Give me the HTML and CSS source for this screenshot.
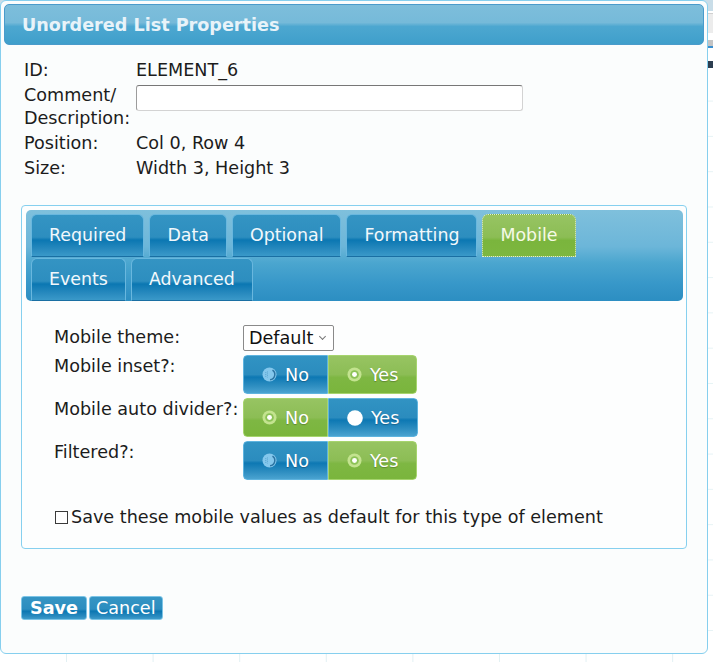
FILE: index.html
```html
<!DOCTYPE html>
<html lang="en">
<head>
<meta charset="utf-8">
<title>Unordered List Properties</title>
<link rel="stylesheet" href="styles.css">
</head>
<body>
<div class="page">
  <div class="page-top"></div>
  <div class="page-bar"></div>
  <div class="page-line"></div>
  <div class="page-nav"></div>
</div>

<div class="dialog" role="dialog" aria-labelledby="dlg-title">
  <div class="dlg-title" id="dlg-title">Unordered List Properties</div>
  <div class="dlg-body">
    <div class="info">
      <div class="info-label">ID:</div>
      <div class="info-value">ELEMENT_6</div>
      <div class="info-label">Comment/<br>Description:</div>
      <div class="info-value"><input class="comment" type="text"></div>
      <div class="info-label">Position:</div>
      <div class="info-value">Col 0, Row 4</div>
      <div class="info-label">Size:</div>
      <div class="info-value">Width 3, Height 3</div>
    </div>

    <div class="tabs">
      <div class="tab-head">
        <div class="tab-row">
          <span class="tab">Required</span>
          <span class="tab">Data</span>
          <span class="tab">Optional</span>
          <span class="tab">Formatting</span>
          <span class="tab active">Mobile</span>
        </div>
        <div class="tab-row">
          <span class="tab">Events</span>
          <span class="tab">Advanced</span>
        </div>
      </div>

      <div class="tab-content">
        <div class="form">
          <div class="f-label">Mobile theme:</div>
          <div class="f-field">
            <span class="select-wrap">
              <select class="select"><option>Default</option></select>
            </span>
          </div>

          <div class="f-label">Mobile inset?:</div>
          <div class="f-field">
            <div class="seg-group">
              <span class="seg off"><svg class="ico" viewBox="0 0 16 16"><circle cx="8" cy="8" r="7.5" fill="#84c7ec"/><path d="M11.2 3.4 A5.6 5.6 0 0 1 8.6 13.6" fill="none" stroke="#2c74a2" stroke-width="1.6"/><path d="M4 5.5v5M5.8 4.8v6.4" stroke="#4f9ccb" stroke-width="0.9" stroke-dasharray="1 1"/></svg>No</span>
              <span class="seg on"><svg class="ico" viewBox="0 0 16 16"><circle cx="8" cy="8" r="7.5" fill="#c3e38f"/><circle cx="8" cy="8" r="4.6" fill="#8cc256"/><circle cx="8" cy="8" r="2.6" fill="#ffffff"/></svg>Yes</span>
            </div>
          </div>

          <div class="f-label">Mobile auto divider?:</div>
          <div class="f-field">
            <div class="seg-group">
              <span class="seg on"><svg class="ico" viewBox="0 0 16 16"><circle cx="8" cy="8" r="7.5" fill="#c3e38f"/><circle cx="8" cy="8" r="4.6" fill="#8cc256"/><circle cx="8" cy="8" r="2.6" fill="#ffffff"/></svg>No</span>
              <span class="seg off"><svg class="ico big" viewBox="0 0 16 16"><circle cx="8" cy="8" r="7.8" fill="#ffffff"/></svg>Yes</span>
            </div>
          </div>

          <div class="f-label">Filtered?:</div>
          <div class="f-field">
            <div class="seg-group">
              <span class="seg off"><svg class="ico" viewBox="0 0 16 16"><circle cx="8" cy="8" r="7.5" fill="#84c7ec"/><path d="M11.2 3.4 A5.6 5.6 0 0 1 8.6 13.6" fill="none" stroke="#2c74a2" stroke-width="1.6"/><path d="M4 5.5v5M5.8 4.8v6.4" stroke="#4f9ccb" stroke-width="0.9" stroke-dasharray="1 1"/></svg>No</span>
              <span class="seg on"><svg class="ico" viewBox="0 0 16 16"><circle cx="8" cy="8" r="7.5" fill="#c3e38f"/><circle cx="8" cy="8" r="4.6" fill="#8cc256"/><circle cx="8" cy="8" r="2.6" fill="#ffffff"/></svg>Yes</span>
            </div>
          </div>
        </div>

        <label class="save-default"><input type="checkbox" class="chk">Save these mobile values as default for this type of element</label>
      </div>
    </div>

    <div class="actions">
      <button class="btn btn-save" type="button">Save</button>
      <button class="btn btn-cancel" type="button">Cancel</button>
    </div>
  </div>
</div>
</body>
</html>
```

FILE: styles.css
```css
html, body {
  margin: 0;
  padding: 0;
}

body {
  width: 713px;
  height: 662px;
  overflow: hidden;
  position: relative;
  font-family: "DejaVu Sans", Verdana, sans-serif;
  background-color: #ffffff;
  background-image:
    linear-gradient(90deg, #e2f0f3 0 1px, transparent 1px),
    linear-gradient(180deg, #e6f3f5 0 1px, transparent 1px);
  background-size: 86.6px 100%, 100% 35.3px;
  background-position: 66px 0, 0 30px;
  background-repeat: repeat-x, repeat-y;
}

/* underlying page (behind the dialog) */
.page {
  display: flex;
  flex-direction: column;
}
.page-top {
  height: 11px;
  background: #c9dde8;
}
.page-bar {
  height: 19px;
  margin-top: 2px;
  background: #ececec;
  border-top: 1px solid #d0d0d0;
}
.page-line {
  height: 6px;
  margin-top: 7px;
  background: #c4c4c4;
  border-bottom: 2px solid #3b8fd0;
}
.page-nav {
  height: 7px;
  margin-top: 13px;
  background: #2c3e50;
}

/* dialog */
.dialog {
  position: absolute;
  left: 0;
  top: 0;
  width: 708px;
  height: 654px;
  box-sizing: border-box;
  padding: 3px;
  background: #fbfdfd;
  border: 1px solid #86cfee;
  border-radius: 6px;
}

.dlg-title {
  height: 41px;
  box-sizing: border-box;
  padding-left: 17px;
  border: 1px solid #4a9bcb;
  border-radius: 5px;
  background: linear-gradient(to bottom, #7dbedb 0%, #76bad9 45%, #4da7d0 55%, #3f9fcb 100%);
  color: #e8f3f9;
  font-weight: bold;
  font-size: 17.6px;
  line-height: 40px;
}

.dlg-body {
  padding: 13px 17px 0 17px;
}

/* info block */
.info {
  display: grid;
  grid-template-columns: 112px 1fr;
  margin-left: 3px;
  font-size: 17.6px;
  line-height: 23px;
  color: #1c1c1c;
}
.info-label,
.info-value {
  padding: 1px 0;
}
.comment {
  display: block;
  box-sizing: border-box;
  width: 387px;
  height: 26px;
  margin: 1px 0 0 0;
  padding: 0 4px;
  border: 1px solid #d3d3d3;
  border-top-color: #777777;
  border-left-color: #9c9c9c;
  border-radius: 3px;
  background: #ffffff;
  font-family: inherit;
  font-size: 16px;
}

/* tabs panel */
.tabs {
  margin-top: 24px;
  border: 1px solid #86d0ef;
  border-radius: 4px;
  padding: 4px 3px 0 4px;
  background: #fdfefe;
}
.tab-head {
  display: flex;
  flex-direction: column;
  gap: 1px;
  padding: 4px 0 0 5px;
  border-radius: 5px;
  background: linear-gradient(to bottom, #7fc0dc 0%, #6cb6d9 40%, #4ba6cf 58%, #3898c9 80%, #2c8ec2 100%);
}
.tab-row {
  display: flex;
  gap: 5px;
}
.tab {
  height: 43px;
  box-sizing: border-box;
  padding: 0 17px;
  border: 1px solid #69b7de;
  border-bottom-color: #1a6fa3;
  border-radius: 6px 6px 0 0;
  background: linear-gradient(to bottom, #3494c3 0%, #2d8ebf 54%, #0b77b2 61%, #2a8bbf 85%, #3a99c9 100%);
  color: #f2f8fc;
  font-size: 17.4px;
  line-height: 41px;
}
.tab.active {
  border: 1px dotted #e4ecd0;
  background: linear-gradient(to bottom, #97c462 0%, #8cbd55 54%, #7ab53d 62%, #7db73f 100%);
  color: #f6fae6;
}

.tab-content {
  padding: 24px 0 19px 28px;
  color: #1c1c1c;
  font-size: 17.6px;
}

.form {
  display: grid;
  grid-template-columns: 189px auto;
  row-gap: 4px;
  align-items: start;
}
.f-label {
  line-height: 23px;
}
.f-label:first-child {
  padding-top: 1px;
}
.f-field {
  display: flex;
}

.select-wrap {
  position: relative;
  display: inline-block;
}
.select {
  appearance: none;
  -webkit-appearance: none;
  display: block;
  box-sizing: border-box;
  width: 91px;
  height: 26px;
  margin: 0;
  padding: 0 0 0 5px;
  border: 1px solid #8a8a8a;
  border-radius: 2px;
  background: #ffffff;
  color: #111111;
  font-family: inherit;
  font-size: 17.6px;
}
.select-wrap::after {
  content: "";
  position: absolute;
  right: 9px;
  top: 9px;
  width: 4px;
  height: 4px;
  border-right: 1px solid #777777;
  border-bottom: 1px solid #777777;
  transform: rotate(45deg);
  pointer-events: none;
}

/* segmented radio groups */
.seg-group {
  display: inline-flex;
  height: 39px;
  border-radius: 4px;
  overflow: hidden;
}
.seg {
  display: flex;
  align-items: center;
  gap: 8px;
  box-sizing: border-box;
  padding: 0 18px 0 18px;
  color: #ffffff;
  font-size: 17.6px;
  text-shadow: 0 1px 1px rgba(0, 0, 0, 0.25);
}
.seg:first-child {
  border-radius: 4px 0 0 4px;
}
.seg:last-child {
  border-radius: 0 4px 4px 0;
}
.seg.off {
  border: 1px solid #5fb4df;
  background: linear-gradient(to bottom, #3193c3 0%, #2b8cbe 50%, #0d78b3 57%, #2d8dc0 80%, #4aa3d0 100%);
}
.seg.on {
  border: 1px solid #a6d46e;
  background: linear-gradient(to bottom, #97c462 0%, #8cbd55 50%, #7eb743 58%, #7ab53c 100%);
}
.ico {
  width: 15px;
  height: 15px;
  flex: none;
}
.ico.big {
  width: 16px;
  height: 16px;
}

.save-default {
  display: flex;
  align-items: center;
  margin-top: 26px;
  line-height: 23px;
  color: #1c1c1c;
}
.chk {
  appearance: none;
  -webkit-appearance: none;
  width: 13px;
  height: 13px;
  box-sizing: border-box;
  margin: 0 3px 0 1px;
  border: 1px solid #3a3a3a;
  background: #ffffff;
  border-radius: 0;
}

/* actions */
.actions {
  display: flex;
  gap: 2px;
  margin-top: 47px;
}
.btn {
  height: 24px;
  box-sizing: border-box;
  margin: 0;
  padding: 0 7px;
  border: 1px solid #7cc4e6;
  border-radius: 3px;
  background: linear-gradient(to bottom, #3595c4 0%, #2c8dbf 55%, #0c77b2 65%, #2a8bbf 88%, #3c9bca 100%);
  color: #ffffff;
  font-family: inherit;
  font-size: 17.6px;
  line-height: 22px;
}
.btn-save {
  font-weight: bold;
  padding: 0 8px;
}
.btn-cancel {
  padding: 0 6px;
}
```
